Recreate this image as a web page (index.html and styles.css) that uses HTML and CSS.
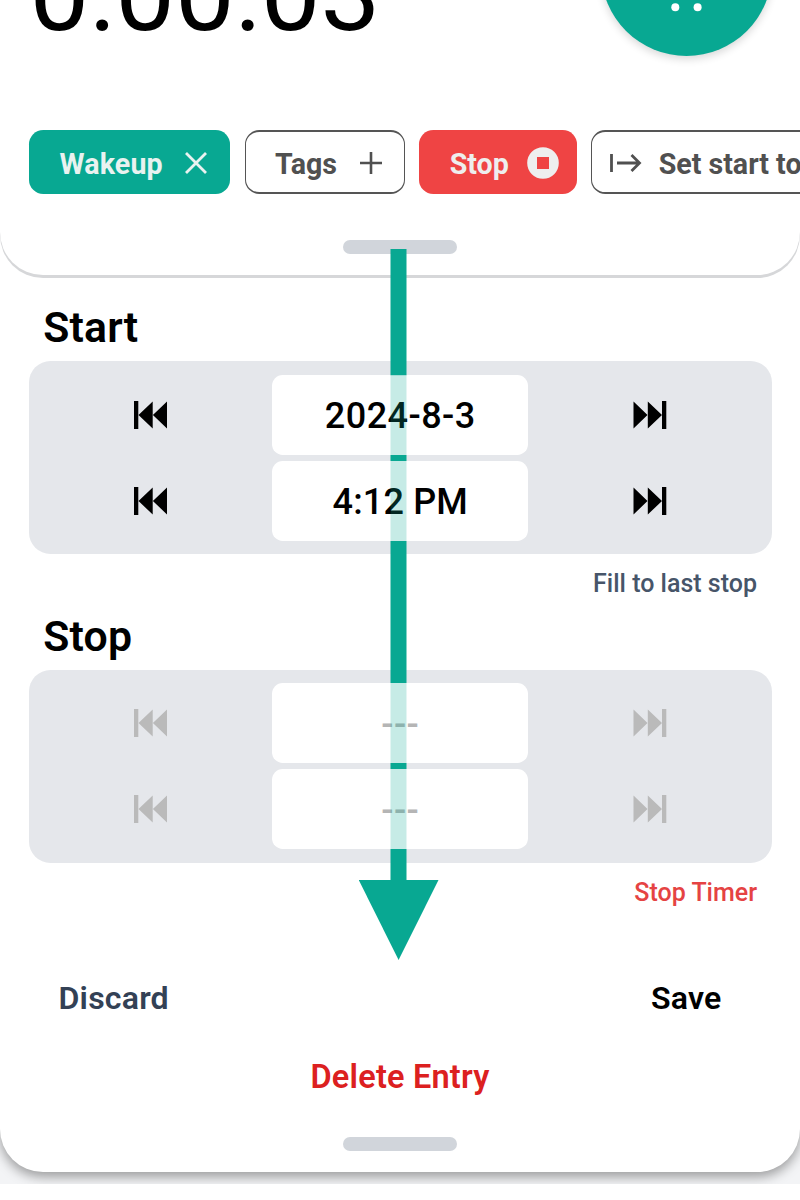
FILE: index.html
```html
<!DOCTYPE html>
<html lang="en">
<head>
<meta charset="utf-8">
<title>Time entry</title>
<link rel="stylesheet" href="styles.css">
</head>
<body>
<svg class="defs" width="0" height="0" aria-hidden="true">
  <symbol id="back" viewBox="0 0 34 30"><path d="M0 1h4.300v28H0zM18.700 1.500v27L4.500 15zM33 1.500v27L18.900 15z"/></symbol>
  <symbol id="forward" viewBox="0 0 34 30"><path d="M33.300 1h-4.300v28h4.300zM.500 1.500v27L14.500 15zM14.800 1.500v27L29 15z"/></symbol>
</svg>
<div class="screen">
  <main class="sheet">
    <header class="header">
      <div class="timer-row">
        <span class="timer">0:00:03</span>
        <button class="toggle" aria-label="Timer"><svg width="172" height="172"><g fill="#fff"><circle cx="74.300" cy="123.300" r="4"/><circle cx="96.600" cy="123.300" r="4"/></g></svg></button>
      </div>
      <div class="chips">
        <button class="chip chip-project"><span>Wakeup</span><svg width="22" height="22" viewBox="0 0 22 22"><path d="M1 1l20 20M21 1L1 21" stroke="currentColor" stroke-width="2.800"/></svg></button>
        <button class="chip chip-tags"><span>Tags</span><svg width="22" height="22" viewBox="0 0 22 22"><path d="M11 0v22M0 11h22" stroke="currentColor" stroke-width="2.600"/></svg></button>
        <button class="chip chip-stop"><span>Stop</span><svg width="32" height="32" viewBox="0 0 32 32"><path fill="currentColor" fill-rule="evenodd" d="M16 .2a15.800 15.800 0 1 0 0 31.600a15.800 15.800 0 0 0 0-31.600zM10 10h12v12H10z"/></svg></button>
        <button class="chip chip-last"><svg width="32" height="20" viewBox="0 0 32 20"><path d="M1.500 1v18M7 10h23M21.500 2l8 8-8 8" fill="none" stroke="currentColor" stroke-width="2.800"/></svg><span>Set start to last stop</span></button>
      </div>
      <div class="handle"></div>
    </header>
    <section class="group">
      <h2>Start</h2>
      <div class="panel">
        <svg class="skip"><use href="#back"/></svg><div class="field">2024-8-3</div><svg class="skip"><use href="#forward"/></svg>
        <svg class="skip"><use href="#back"/></svg><div class="field field-time">4:12 PM</div><svg class="skip"><use href="#forward"/></svg>
      </div>
      <a class="link">Fill to last stop</a>
    </section>
    <section class="group">
      <h2>Stop</h2>
      <div class="panel disabled">
        <svg class="skip"><use href="#back"/></svg><div class="field">---</div><svg class="skip"><use href="#forward"/></svg>
        <svg class="skip"><use href="#back"/></svg><div class="field">---</div><svg class="skip"><use href="#forward"/></svg>
      </div>
      <a class="link link-stop">Stop Timer</a>
    </section>
    <div class="actions"><a class="discard">Discard</a><a class="save">Save</a></div>
    <a class="delete">Delete Entry</a>
    <div class="handle"></div>
  </main>
  <svg class="arrow" width="80" height="711" viewBox="0 0 80 711">
    <g fill="#08a892">
      <path d="M31.500 0h16v126.300h-16zM31.500 206h16v6h-16zM31.500 292h16v142h-16zM31.500 514h16v6h-16zM31.500 600h16v31h-16z"/>
      <path fill-opacity=".23" d="M31.500 126.300h16V206h-16zM31.500 212h16v80h-16zM31.500 434h16v80h-16zM31.500 520h16v80h-16z"/>
      <path d="M-.2 631h79.700l-39.900 80z"/>
    </g>
  </svg>
</div>
</body>
</html>
```
FILE: styles.css
```css
* { box-sizing: border-box; }
body { margin: 0; background: #fff; font-family: Roboto, sans-serif; font-weight: 500; color: #000; }
button { border: 0; background: none; padding: 0; font: inherit; }
.defs { position: absolute; }
.screen { position: relative; width: 800px; height: 1184px; overflow: hidden; background: #f3f4f6; }
.sheet { height: 1171.500px; background: #fff; border-radius: 0 0 43px 43px; box-shadow: 0 5px 12px rgba(0,0,0,.36); overflow: hidden; }
.header { height: 275px; border-radius: 0 0 43px 43px; box-shadow: 0 3px 0 #d6d7d9; overflow: hidden; }
.timer-row { display: flex; justify-content: space-between; height: 171.400px; margin-top: -115.600px; padding: 0 27.800px 0 29.500px; }
.timer { font-size: 106.500px; font-weight: 400; line-height: 125px; padding-top: 46.400px; }
.toggle { width: 171.400px; height: 171.400px; border-radius: 50%; background: #08a892; box-shadow: 0 3px 8px rgba(0,0,0,.16); }
.toggle svg { display: block; }
.chips { display: flex; gap: 14.300px; width: 1000px; margin-top: 74.200px; padding-left: 29px; }
.chip { display: flex; align-items: center; justify-content: space-between; height: 64.300px; flex: none; border-radius: 14.300px; padding: 2px 23px 0 30.500px; font-size: 28.600px; font-weight: 700; }
.chip span { position: relative; top: 1px; }
.chip-project { width: 201.300px; background: #08a892; color: #e9f2f0; }
.chip-project span { letter-spacing: .15px; }
.chip-tags { width: 160.300px; border: solid #555; border-width: 2px 1.500px; padding: 2px 22px 0 29.500px; color: #505050; }
.chip-stop { width: 157.700px; background: #ef4444; color: #eee; padding-right: 18px; }
.chip-last { width: 330px; border: solid #555; border-width: 2px 1.500px; justify-content: flex-start; gap: 17px; padding: 2px 0 0 17.500px; color: #505050; }
.handle { width: 114px; height: 14.300px; margin: 45.700px auto 0; border-radius: 8px; background: #d1d5db; }
.group { height: 308.600px; display: flex; flex-direction: column; padding: 27px 28.500px 0 29px; }
h2 { flex: none; margin: 0; padding-left: 14.300px; height: 59.300px; font-size: 42.800px; font-weight: 600; letter-spacing: .15px; line-height: 51px; }
.panel { flex: none; height: 193px; display: grid; grid-template-columns: 1fr 256px 1fr; grid-template-rows: 80px 80px; align-content: center; row-gap: 6px; align-items: center; justify-items: center; border-radius: 21.400px; background: #e5e7eb; }
.skip { width: 34px; height: 30px; }
.field { width: 256px; height: 80px; border-radius: 10.700px; background: #fff; font-size: 36px; font-weight: 500; letter-spacing: .45px; line-height: 83px; text-align: center; }
.field-time { letter-spacing: .15px; }
.disabled .skip { fill: #bababa; }
.disabled .field { color: #b5b5b5; line-height: 84px; }
.link { align-self: flex-end; margin: 15px 14.500px 0 0; font-size: 25px; line-height: 29px; color: #475569; }
.link-stop { color: #e54343; }
.actions { display: flex; justify-content: space-between; margin-top: 86.500px; padding: 0 78.500px 0 58.500px; font-size: 32.100px; font-weight: 600; letter-spacing: .2px; line-height: 38px; }
.discard { color: #334155; }
.delete { display: block; margin-top: 40px; text-align: center; font-size: 32.500px; font-weight: 600; letter-spacing: .2px; line-height: 40px; color: #dc2020; }
.sheet > .handle { margin-top: 40px; }
.arrow { position: absolute; left: 359px; top: 249px; }
```
